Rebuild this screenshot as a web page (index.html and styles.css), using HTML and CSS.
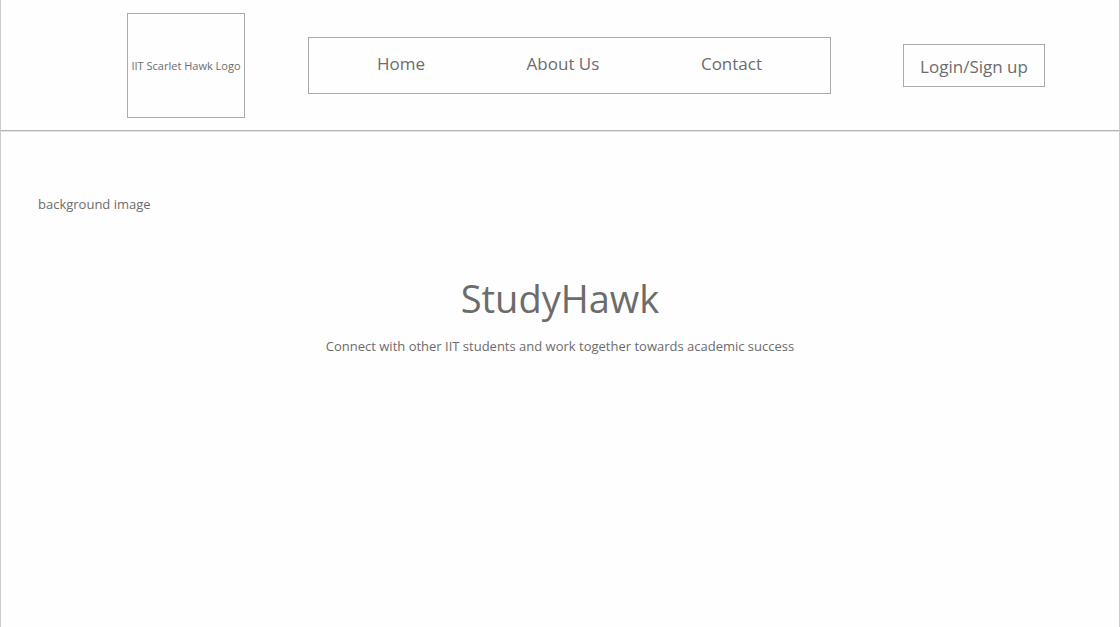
FILE: index.html
```html
<!DOCTYPE html>
<html lang="en">
<head>
<meta charset="utf-8">
<meta name="viewport" content="width=device-width, initial-scale=1">
<title>StudyHawk</title>
<link rel="stylesheet" href="styles.css">
</head>
<body>
<header class="header">
  <div class="logo">IIT Scarlet Hawk Logo</div>
  <nav class="nav">
    <a class="nav-link" href="#home">Home</a>
    <a class="nav-link" href="#about">About Us</a>
    <a class="nav-link" href="#contact">Contact</a>
  </nav>
  <button class="login" type="button">Login/Sign up</button>
</header>
<main class="hero">
  <p class="note">background image</p>
  <h1 class="title">StudyHawk</h1>
  <p class="tagline">Connect with other IIT students and work together towards academic success</p>
</main>
</body>
</html>
```
FILE: styles.css
```css
* {
  box-sizing: border-box;
}

body {
  margin: 0;
  min-height: 100vh;
  display: flex;
  flex-direction: column;
  border: solid #cbcbcb;
  border-width: 0 1px;
  background: #fefefe;
  color: #6c6c6c;
  font-family: "Open Sans", "Noto Sans", sans-serif;
}

.header {
  display: flex;
  align-items: center;
  padding: 13px 74px 12px 126px;
  border-bottom: 1px solid #b4b4b4;
  box-shadow: 0 1px #e4e4e4;
}

.logo {
  display: flex;
  align-items: center;
  justify-content: center;
  width: 118px;
  height: 105px;
  border: 1px solid #aaa;
  font-size: 11px;
  white-space: nowrap;
}

.nav {
  display: flex;
  flex: 1;
  align-items: center;
  justify-content: space-between;
  height: 57px;
  margin: 0 72px 0 63px;
  padding: 0 68px 4px;
  border: 1px solid #aaa;
}

.nav-link {
  color: inherit;
  font-size: 17px;
  text-decoration: none;
}

.login {
  width: 142px;
  height: 43px;
  padding: 2px 0 0;
  border: 1px solid #aaa;
  background: #fefefe;
  color: inherit;
  font-family: inherit;
  font-size: 17px;
}

.hero {
  flex: 1;
  padding: 63px 37px;
  text-align: center;
}

.note {
  margin: 0;
  font-size: 13px;
  line-height: 20px;
  text-align: left;
}

.title {
  margin: 59px 0 0;
  font-size: 38px;
  font-weight: 400;
  line-height: 50px;
}

.tagline {
  margin: 13px 0 0;
  font-size: 13px;
  line-height: 20px;
}
```
